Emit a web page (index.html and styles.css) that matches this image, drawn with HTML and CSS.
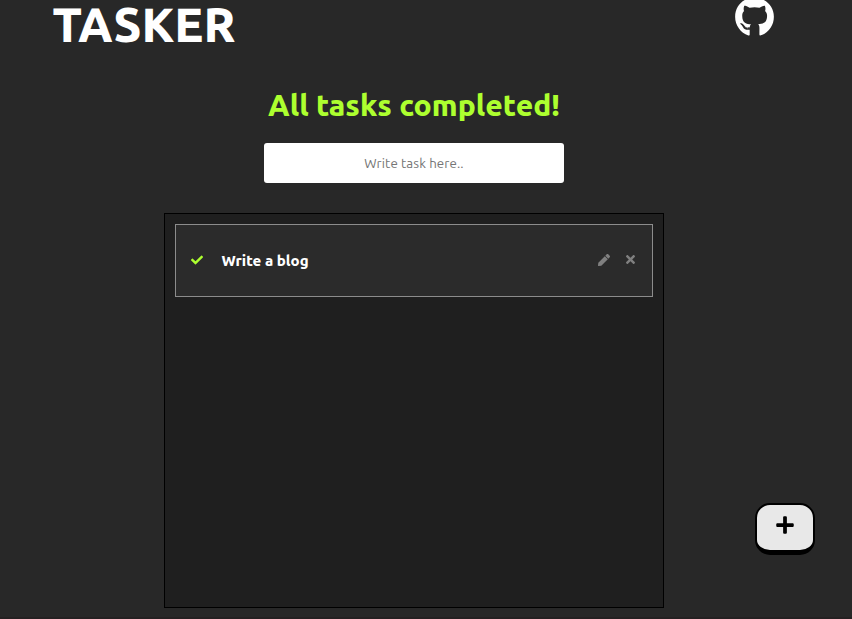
FILE: index.html
```
<!DOCTYPE html>
<html lang="en">
<head>
<meta charset="utf-8">
<title>Tasker</title>
<link rel="stylesheet" href="styles.css">
</head>
<body>
<header class="header">
  <h1 class="brand">TASKER</h1>
  <a class="github" href="#" aria-label="GitHub">
    <svg viewBox="0 0 496 512"><path d="M165.900 397.400c0 2-2.300 3.600-5.200 3.600-3.300.3-5.600-1.300-5.600-3.600 0-2 2.300-3.600 5.200-3.600 3-.3 5.600 1.300 5.600 3.600zm-31.100-4.500c-.7 2 1.300 4.300 4.300 4.900 2.600 1 5.600 0 6.200-2s-1.300-4.300-4.300-5.200c-2.600-.7-5.500.3-6.200 2.300zm44.200-1.700c-2.900.7-4.900 2.600-4.600 4.900.3 2 2.900 3.300 5.900 2.600 2.900-.7 4.900-2.600 4.600-4.600-.3-1.900-3-3.200-5.900-2.900zM244.800 8C106.100 8 0 113.300 0 252c0 110.900 69.800 205.800 169.500 239.200 12.800 2.300 17.300-5.600 17.300-12.100 0-6.200-.3-40.400-.3-61.400 0 0-70 15-84.700-29.800 0 0-11.400-29.100-27.800-36.600 0 0-22.900-15.700 1.600-15.400 0 0 24.900 2 38.600 25.800 21.900 38.600 58.600 27.500 72.900 20.900 2.300-16 8.800-27.100 16-33.700-55.900-6.200-112.300-14.300-112.300-110.500 0-27.500 7.600-41.300 23.600-58.900-2.600-6.500-11.100-33.300 2.600-67.900 20.900-6.500 69 27 69 27 20-5.600 41.500-8.500 62.800-8.500s42.800 2.900 62.800 8.500c0 0 48.100-33.600 69-27 13.700 34.700 5.200 61.400 2.600 67.900 16 17.700 25.800 31.500 25.800 58.900 0 96.500-58.900 104.200-114.800 110.500 9.200 7.900 17 22.900 17 46.400 0 33.700-.3 75.400-.3 83.600 0 6.500 4.600 14.400 17.300 12.100C428.200 457.800 496 362.900 496 252 496 113.300 383.500 8 244.800 8z"/></svg>
  </a>
</header>
<main class="main">
  <h2 class="status">All tasks completed!</h2>
  <input class="task-input" type="text" placeholder="Write task here..">
  <section class="list">
    <article class="task">
      <svg class="check" viewBox="0 0 512 512"><path d="M173.898 439.404l-166.400-166.400c-9.997-9.997-9.997-26.206 0-36.204l36.203-36.204c9.997-9.998 26.207-9.998 36.204 0L192 312.690 432.095 72.596c9.997-9.997 26.207-9.997 36.204 0l36.203 36.204c9.997 9.997 9.997 26.206 0 36.204l-294.400 294.401c-9.998 9.997-26.207 9.997-36.204-.001z"/></svg>
      <span class="task-name">Write a blog</span>
      <svg class="edit" viewBox="0 0 512 512"><path d="M290.740 93.240l128.020 128.020-277.990 277.990-114.140 12.600C11.350 513.540-1.560 500.620.140 485.340l12.700-114.220 277.900-277.880zm207.200-19.060l-60.110-60.110c-18.750-18.750-49.160-18.750-67.910 0l-56.550 56.550 128.020 128.020 56.550-56.550c18.750-18.760 18.750-49.160 0-67.910z"/></svg>
      <svg class="remove" viewBox="0 0 352 512"><path d="M242.720 256l100.070-100.070c12.280-12.280 12.280-32.190 0-44.480l-22.240-22.240c-12.280-12.280-32.190-12.280-44.480 0L176 189.280 75.930 89.210c-12.280-12.280-32.190-12.280-44.480 0L9.210 111.450c-12.280 12.280-12.280 32.190 0 44.480L109.280 256 9.210 356.070c-12.280 12.280-12.280 32.190 0 44.480l22.240 22.240c12.280 12.280 32.200 12.280 44.480 0L176 322.720l100.070 100.070c12.280 12.280 32.200 12.280 44.480 0l22.240-22.240c12.280-12.280 12.280-32.190 0-44.480L242.720 256z"/></svg>
    </article>
  </section>
</main>
<button class="add" aria-label="Add task">
  <svg viewBox="0 0 448 512"><path d="M416 208H272V64c0-17.670-14.330-32-32-32h-32c-17.670 0-32 14.330-32 32v144H32c-17.670 0-32 14.330-32 32v32c0 17.670 14.330 32 32 32h144v144c0 17.670 14.330 32 32 32h32c17.670 0 32-14.330 32-32V304h144c17.670 0 32-14.330 32-32v-32c0-17.670-14.330-32-32-32z"/></svg>
</button>
</body>
</html>
```
FILE: styles.css
```
* { box-sizing: border-box; }
body {
  margin: 0;
  height: 619px;
  overflow: hidden;
  background: #282828;
  border-bottom: 2px solid #252122;
  color: #fff;
  font-family: Ubuntu, "Noto Sans", sans-serif;
}
svg { display: block; fill: currentColor; flex: none; }
.header {
  display: flex;
  justify-content: space-between;
  align-items: flex-start;
  height: 85px;
  padding: 0 78.5px 0 52.5px;
}
.brand {
  margin: 0;
  font-size: 48px;
  font-weight: 800;
  line-height: 49px;
  white-space: nowrap;
}
.github { margin-top: -3px; color: #fff; }
.github svg { width: 39px; height: 40px; }
.main {
  display: flex;
  flex-direction: column;
  align-items: center;
  width: 500px;
  margin-left: 164px;
}
.status {
  margin: 0;
  height: 58px;
  font-size: 30px;
  font-weight: 800;
  line-height: 41px;
  letter-spacing: 0.04px;
  color: #adff2f;
  white-space: nowrap;
}
.task-input {
  width: 300px;
  height: 40px;
  padding: 0;
  border: 0;
  border-radius: 3px;
  background: #fff;
  text-align: center;
  font-family: inherit;
  font-size: 13.333px;
  letter-spacing: 0.1px;
}
.task-input::placeholder { color: #757575; }
.list {
  width: 500px;
  height: 395px;
  margin-top: 30px;
  padding: 10px;
  border: 1px solid #000;
  background: #1f1f1f;
}
.task {
  display: flex;
  align-items: center;
  height: 73px;
  padding: 0 16px 0 15px;
  border: 1px solid #8c8c8c;
  background: #2b2b2b;
}
.check { width: 12px; height: 12px; margin-top: -1px; color: #adff2f; }
.task-name {
  flex: 1;
  margin-left: 18.5px;
  font-size: 15px;
  font-weight: 800;
  white-space: nowrap;
}
.edit { width: 12px; height: 12px; margin-top: -1px; color: #808080; }
.remove { width: 9px; height: 13px; margin: -2px 1px 0 16px; color: #808080; }
.add {
  position: fixed;
  left: 755px;
  top: 503px;
  width: 60px;
  height: 52px;
  display: flex;
  justify-content: center;
  align-items: center;
  padding: 0 0 5px;
  border: 2px solid #000;
  border-bottom-width: 5px;
  border-radius: 15px;
  background: #e8e8e8;
  color: #000;
}
.add svg { width: 18px; height: 20px; }
```
